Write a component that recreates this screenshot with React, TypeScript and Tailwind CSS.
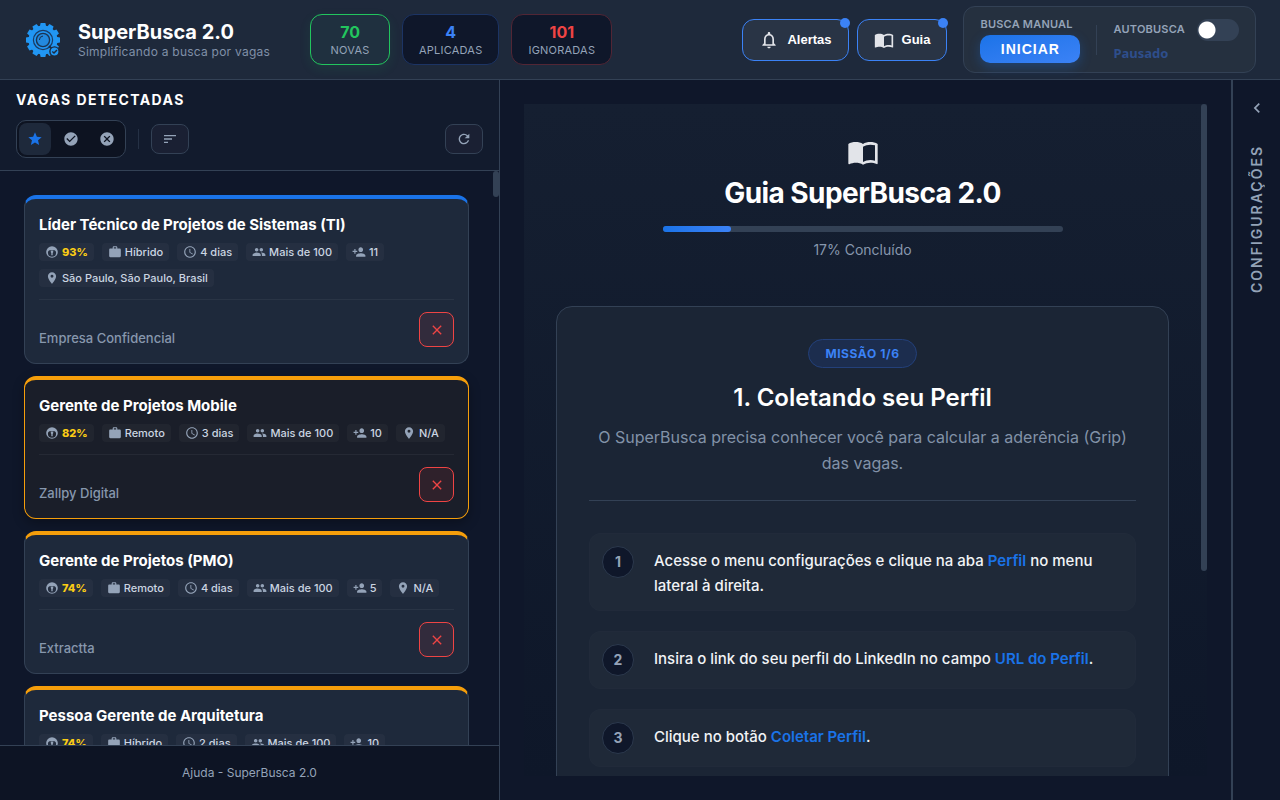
import {
  MdAccessTime,
  MdCancel,
  MdCheckCircle,
  MdChevronLeft,
  MdClose,
  MdImportContacts,
  MdLocationOn,
  MdNotificationsNone,
  MdPeople,
  MdPersonAdd,
  MdRefresh,
  MdSort,
  MdStar,
  MdWork,
} from "react-icons/md";

const stats = [
  { value: 70, label: "NOVAS", box: "border-[#22c55e] bg-[#1f303f] shadow-[0_4px_12px_rgba(34,197,94,0.1)]", text: "text-[#22c55e]" },
  { value: 4, label: "APLICADAS", box: "border-[#1c3464] bg-[#0f172a]", text: "text-[#3b82f6]" },
  { value: 101, label: "IGNORADAS", box: "border-[#522635] bg-[#0f172a]", text: "text-[#ef4444]" },
];

const jobs = [
  {
    title: "Líder Técnico de Projetos de Sistemas (TI)",
    grip: "93%",
    mode: "Híbrido",
    age: "4 dias",
    invites: "11",
    place: "São Paulo, São Paulo, Brasil",
    company: "Empresa Confidencial",
    style: "border-[#334155] border-t-[#1a73e8] bg-[#1e293b]",
  },
  {
    title: "Gerente de Projetos Mobile",
    grip: "82%",
    mode: "Remoto",
    age: "3 dias",
    invites: "10",
    place: "N/A",
    company: "Zallpy Digital",
    style: "border-[#f59e0b] bg-[#1a1e29] shadow-[0_4px_12px_rgba(0,0,0,0.3)]",
  },
  {
    title: "Gerente de Projetos (PMO)",
    grip: "74%",
    mode: "Remoto",
    age: "4 dias",
    invites: "5",
    place: "N/A",
    company: "Extractta",
    style: "border-[#334155] border-t-[#f59e0b] bg-[#1e293b]",
  },
  {
    title: "Pessoa Gerente de Arquitetura",
    grip: "74%",
    mode: "Híbrido",
    age: "2 dias",
    invites: "10",
    place: "",
    company: "",
    style: "border-[#334155] border-t-[#f59e0b] bg-[#1e293b]",
  },
];

const steps = [
  { before: "Acesse o menu configurações e clique na aba ", link: "Perfil", after: " no menu lateral à direita." },
  { before: "Insira o link do seu perfil do LinkedIn no campo ", link: "URL do Perfil", after: "." },
  { before: "Clique no botão ", link: "Coletar Perfil", after: "." },
];

const Logo = () => (
  <svg viewBox="0 0 36 36" className="size-9 shrink-0" aria-hidden="true">
    <g fill="#2196f3">
      <circle cx="19" cy="18" r="14.5" />
      {[0, 30, 60, 90, 120, 150, 180, 210, 240, 270, 300, 330].map((angle) => (
        <path key={angle} d="M15.8 5 L16.6 1 H21.4 L22.2 5 Z" transform={`rotate(${angle} 19 18)`} />
      ))}
    </g>
    <circle cx="19" cy="18" r="9.6" fill="none" stroke="#1b3a62" strokeWidth="1.2" />
    <circle cx="19" cy="18" r="6.6" fill="#2389de" stroke="#1c3350" strokeWidth="1.4" />
    <path d="M15.4 18a4 4 0 0 1 3.6-4" fill="none" stroke="#1c2d45" strokeWidth="1" />
    <path d="M25 24l3 3" stroke="#1c2d45" strokeWidth="2" />
    <circle cx="30.5" cy="29.5" r="4.6" fill="#2196f3" stroke="#1e293b" strokeWidth="1.4" />
    <path d="M28.3 29.5l1.7 1.6 3-3.2" fill="none" stroke="#1e293b" strokeWidth="1.4" />
  </svg>
);

const GripIcon = ({ className }: { className?: string }) => (
  <svg viewBox="0 0 24 24" className={className} fill="currentColor" aria-hidden="true">
    <path
      fillRule="evenodd"
      d="M12 2a10 10 0 1 0 0 20 10 10 0 0 0 0-20zM7.5 9h9c1.6 1 2.5 2.5 2.5 4.3a7 6.7 0 0 1-14 0C5 11.5 5.9 10 7.500 9z"
    />
    <circle cx="12" cy="11.5" r="2.2" />
    <path d="M10.8 12h2.4v5.5h-2.4z" />
  </svg>
);

const Chip = ({ icon: Icon, children, bold = false }: { icon: any; children: string; bold?: boolean }) => (
  <span className="flex h-[18px] items-center gap-[3px] rounded bg-white/[0.03] px-1.5 text-[11px] font-medium text-[#cbd5e1]">
    <Icon className="size-3.5 text-[#94a3b8]" />
    <span className={bold ? "font-extrabold text-[#facc15]" : ""}>{children}</span>
  </span>
);

const Header = () => (
  <header className="flex h-20 shrink-0 items-center border-b border-[#334155] bg-[#1e293b] px-6">
    <Logo />
    <div className="ml-[18px] shrink-0">
      <h1 className="text-xl leading-6 font-bold text-white">SuperBusca 2.0</h1>
      <p className="text-xs leading-4 tracking-[0.02em] text-[#8090a8]">Simplificando a busca por vagas</p>
    </div>
    <div className="ml-10 flex shrink-0 gap-3">
      {stats.map((stat) => (
        <div key={stat.label} className={`flex h-[51px] flex-col items-center justify-center rounded-xl border px-4 ${stat.box}`}>
          <span className={`text-base leading-5 font-bold ${stat.text}`}>{stat.value}</span>
          <span className="min-w-[46px] text-center text-[11px] leading-4 tracking-[0.02em] text-[#94a3b8]">{stat.label}</span>
        </div>
      ))}
    </div>
    <div className="ml-auto flex shrink-0 items-center gap-2 font-['Liberation_Sans',sans-serif] text-[13px] font-bold text-white">
      <button className="relative flex h-[42px] items-center gap-2 rounded-xl border border-[#3b82f6] bg-[#293445] px-4">
        <MdNotificationsNone className="size-5 text-[#e2e4e9]" />
        Alertas
        <span className="absolute -top-0.5 -right-0.5 size-2.5 rounded-full bg-[#3b82f6]" />
      </button>
      <button className="relative flex h-[42px] items-center gap-2 rounded-xl border border-[#3b82f6] bg-[#293445] px-4">
        <MdImportContacts className="size-5 text-[#e2e4e9]" />
        Guia
        <span className="absolute -top-0.5 -right-0.5 size-2.5 rounded-full bg-[#3b82f6]" />
      </button>
    </div>
    <div className="ml-4 flex h-[67px] shrink-0 items-center rounded-xl border border-[#334155] bg-[#25303f] px-4">
      <div>
        <p className="text-[11px] leading-[14px] font-semibold tracking-[0.02em] text-[#94a3b8]">BUSCA MANUAL</p>
        <button className="mt-1 block h-7 w-[100px] rounded-[10px] bg-gradient-to-br from-[#1a73e8] to-[#3b82f6] font-['Liberation_Sans',sans-serif] text-sm font-bold tracking-[1px] text-white shadow-[0_4px_12px_rgba(26,115,232,0.3)]">
          INICIAR
        </button>
      </div>
      <div className="mx-4 h-[30px] w-px bg-[#334155]" />
      <div>
        <label className="flex h-[22px] items-center gap-3 text-[11px] font-semibold tracking-[0.02em] text-[#94a3b8]">
          AUTOBUSCA
          <input
            type="checkbox"
            className="h-[22px] w-[42px] appearance-none rounded-full bg-[#334155] bg-[radial-gradient(circle_at_10px_11px,white_8px,transparent_9px)] checked:bg-[#1a73e8]"
          />
        </label>
        <p className="mt-1 font-['Noto_Sans',sans-serif] text-[13px] leading-4 font-bold text-[#2e4e8c]">Pausado</p>
      </div>
    </div>
  </header>
);

const JobCard = ({ job }: { job: (typeof jobs)[number] }) => (
  <article className={`shrink-0 rounded-xl border border-t-4 px-3.5 pt-3.5 pb-4 ${job.style}`}>
    <h3 className="text-[15px] leading-6 font-bold text-white">{job.title}</h3>
    <div className="mt-1.5 flex flex-wrap gap-2 border-b border-white/5 pb-3">
      <Chip icon={GripIcon} bold>{job.grip}</Chip>
      <Chip icon={MdWork}>{job.mode}</Chip>
      <Chip icon={MdAccessTime}>{job.age}</Chip>
      <Chip icon={MdPeople}>Mais de 100</Chip>
      <Chip icon={MdPersonAdd}>{job.invites}</Chip>
      {job.place && <Chip icon={MdLocationOn}>{job.place}</Chip>}
    </div>
    <div className="mt-3 flex items-end justify-between">
      <span className="text-[13px] leading-[18px] font-medium text-[#8797ad]">{job.company}</span>
      <button aria-label="Ignorar vaga" className="flex size-[35px] items-center justify-center rounded-lg border border-[#ef4444] bg-[#ef4444]/10 text-[#ef4444]">
        <MdClose className="size-4" />
      </button>
    </div>
  </article>
);

const JobsPanel = () => (
  <section className="flex w-[500px] shrink-0 flex-col border-r border-[#334155] bg-[#0f172a]">
    <div className="shrink-0 border-b border-[#334155] bg-[#121b2d] px-4 pt-2.5 pb-3">
      <h2 className="text-sm leading-5 font-bold tracking-widest text-white">VAGAS DETECTADAS</h2>
      <div className="mt-2.5 flex items-center text-[#94a3b8]">
        <div className="flex gap-1 rounded-[10px] border border-[#334155] bg-[#0d1321] p-0.5">
          <button aria-label="Novas" className="flex size-8 items-center justify-center rounded-lg bg-[#1e293b] text-[#1a73e8]">
            <MdStar className="size-4" />
          </button>
          <button aria-label="Aplicadas" className="flex size-8 items-center justify-center">
            <MdCheckCircle className="size-4" />
          </button>
          <button aria-label="Ignoradas" className="flex size-8 items-center justify-center">
            <MdCancel className="size-4" />
          </button>
        </div>
        <div className="mx-3 h-5 w-px bg-[#253145]" />
        <button aria-label="Ordenar" className="flex h-[30px] w-[38px] items-center justify-center rounded-lg border border-[#334155] bg-[#1a2033]">
          <MdSort className="size-4" />
        </button>
        <button aria-label="Atualizar" className="ml-auto flex h-[30px] w-[38px] items-center justify-center rounded-lg border border-[#334155] bg-[#1a2033]">
          <MdRefresh className="size-4" />
        </button>
      </div>
    </div>
    <div className="relative flex min-h-0 flex-1 flex-col gap-3 overflow-hidden pt-6 pr-[30px] pl-6">
      {jobs.map((job) => (
        <JobCard key={job.title} job={job} />
      ))}
      <div className="absolute top-0 right-0 h-[26px] w-1.5 rounded-full bg-[#334155]" />
    </div>
    <footer className="flex h-[55px] shrink-0 items-center justify-center border-t border-[#334155] bg-[#0d1424] text-xs text-[#94a3b8]">
      <a href="#ajuda">Ajuda - SuperBusca 2.0</a>
    </footer>
  </section>
);

const Guide = () => (
  <main className="flex min-w-0 flex-1 p-6">
    <div className="relative min-w-0 flex-1 overflow-hidden bg-gradient-to-b from-[#151f31] to-[#0e1729] pt-8 pr-[38px] pl-8">
      <div className="flex flex-col items-center">
        <MdImportContacts className="size-8 text-[#e2e4e9]" />
        <h2 className="mt-1.5 text-[28px] leading-[38px] font-bold tracking-[-0.02em] text-white">Guia SuperBusca 2.0</h2>
        <div className="mt-3.5 h-1.5 w-[400px] rounded-full bg-[#334155]">
          <div className="h-full rounded-full bg-gradient-to-r from-[#1a73e8] to-[#3b82f6]" style={{ width: "17%" }} />
        </div>
        <p className="mt-2 text-sm text-[#8797ad]">17% Concluído</p>
      </div>
      <article className="mt-[46px] rounded-2xl border border-[#334155] bg-[#1b2535] p-8">
        <div className="flex flex-col items-center text-center">
          <span className="flex h-[29px] items-center rounded-full border border-[#23407a] bg-[#1c2d4e] px-4 text-xs font-bold tracking-wider text-[#3b82f6]">
            MISSÃO 1/6
          </span>
          <h3 className="mt-3.5 text-2xl leading-8 font-semibold text-white">1. Coletando seu Perfil</h3>
          <p className="mt-2.5 text-base leading-[26px] text-[#8292a8]">
            O SuperBusca precisa conhecer você para calcular a aderência (Grip) das vagas.
          </p>
        </div>
        <ol className="mt-6 flex flex-col gap-5 border-t border-[#334155] pt-8">
          {steps.map((step, index) => (
            <li key={step.link} className="flex gap-5 rounded-xl border border-white/[0.01] bg-white/[0.02] p-3">
              <span className="flex size-8 shrink-0 items-center justify-center rounded-full border border-[#2c394d] bg-[#0f172a] text-sm font-bold text-[#94a3b8]">
                {index + 1}
              </span>
              <p className="pt-0.5 text-[15px] leading-[25px] font-medium text-[#f1f3f6]">
                {step.before}
                <strong className="font-semibold text-[#1a73e8]">{step.link}</strong>
                {step.after}
              </p>
            </li>
          ))}
        </ol>
      </article>
      <div className="absolute top-0 right-0 h-[467px] w-1.5 rounded-full bg-[#334155]" />
    </div>
  </main>
);

const SettingsRail = () => (
  <aside className="flex w-[49px] shrink-0 flex-col items-center border-l-2 border-[#334155] bg-[#0f172a] pt-[18px] text-[#94a3b8]">
    <button aria-label="Abrir configurações">
      <MdChevronLeft className="size-5" />
    </button>
    <span className="mt-[27px] rotate-180 text-sm font-semibold tracking-[2px] [writing-mode:vertical-rl]">CONFIGURAÇÕES</span>
  </aside>
);

const App = () => {
  return (
    <div className="flex h-screen flex-col overflow-hidden bg-[#0f172a] font-['Inter',sans-serif]">
      <Header />
      <div className="flex min-h-0 flex-1">
        <JobsPanel />
        <Guide />
        <SettingsRail />
      </div>
    </div>
  );
};

export default App;
